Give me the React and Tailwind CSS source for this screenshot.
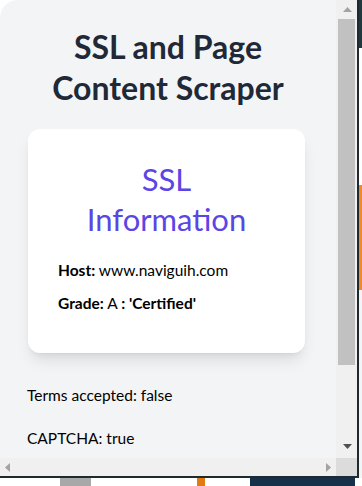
import React from 'react';

const font = { fontFamily: 'Lato, "Noto Sans", sans-serif' };

function VScrollbar() {
  return (
    <div className="w-[21px] flex flex-col bg-[#f0f0f0]">
      <div className="h-[19px] flex items-center justify-center pl-[2px]">
        <svg width="9" height="5" viewBox="0 0 9 5"><path d="M0 5 L4.5 0 L9 5 Z" fill="#a3a3a3" /></svg>
      </div>
      <div className="h-[346px] ml-[2px] w-[17px] bg-[#c1c1c1]" />
      <div className="flex-1 flex items-end justify-center pb-[9px] pl-[2px]">
        <svg width="9" height="5" viewBox="0 0 9 5"><path d="M0 0 L9 0 L4.5 5 Z" fill="#505050" /></svg>
      </div>
    </div>
  );
}

function HScrollbar() {
  return (
    <div className="h-[18px] flex bg-[#f0f0f0]">
      <div className="flex-1 flex items-center justify-between px-[5px]">
        <svg width="5" height="9" viewBox="0 0 5 9"><path d="M5 0 L0 4.5 L5 9 Z" fill="#a3a3a3" /></svg>
        <svg width="5" height="9" viewBox="0 0 5 9"><path d="M0 0 L5 4.5 L0 9 Z" fill="#a3a3a3" /></svg>
      </div>
      <div className="w-[21px] bg-[#dcdcdc]" />
    </div>
  );
}

export default function App() {
  return (
    <div className="w-[362px] h-[486px] bg-white overflow-hidden flex flex-col" style={font}>
      <div className="h-[478px] flex">
        <div className="w-[359px] flex flex-col bg-[#f3f4f6] rounded-tl-[18px] border-r-2 border-b-2 border-[#1d2a2f] overflow-hidden">
          <div className="flex-1 flex min-h-0">
            <div className="flex-1 overflow-hidden">
              <h1 className="mt-[26px] text-center text-[32px] leading-[41px] font-bold text-[#1f2937]">
                SSL and Page<br />Content Scraper
              </h1>
              <div className="mt-[21px] ml-[28px] w-[277px] h-[224px] bg-white rounded-xl shadow-lg px-[30px] pt-[30px]">
                <h2 className="mx-auto max-w-[190px] text-center text-[31px] leading-[40px] text-[#5a45e6]">SSL Information</h2>
                <p className="mt-[20px] text-[15.5px] text-black"><b>Host:</b> www.naviguih.com</p>
                <p className="mt-[10px] text-[15.5px] text-black"><b>Grade:</b> A <b>: 'Certified'</b></p>
              </div>
              <p className="mt-[31px] ml-[27px] text-[15.5px] text-black">Terms accepted: false</p>
              <p className="mt-[20px] ml-[27px] text-[15.5px] text-black">CAPTCHA: true</p>
            </div>
            <VScrollbar />
          </div>
          <HScrollbar />
        </div>
        <div className="flex-1 flex flex-col">
          <div className="h-[48px] bg-[#1f3a3f]" />
          <div className="h-[137px] bg-white" />
          <div className="h-[105px] bg-[#ee8a2a]" />
          <div className="flex-1 bg-[#f4f4f4]" />
        </div>
      </div>
      <div className="flex-1 flex">
        <div className="w-[60px]" />
        <div className="w-[31px] bg-[#a8a8a8]" />
        <div className="w-[106px]" />
        <div className="w-[8px] bg-[#e07b12]" />
        <div className="w-[45px]" />
        <div className="w-[105px] bg-[#17304a]" />
        <div className="flex-1" />
      </div>
    </div>
  );
}
